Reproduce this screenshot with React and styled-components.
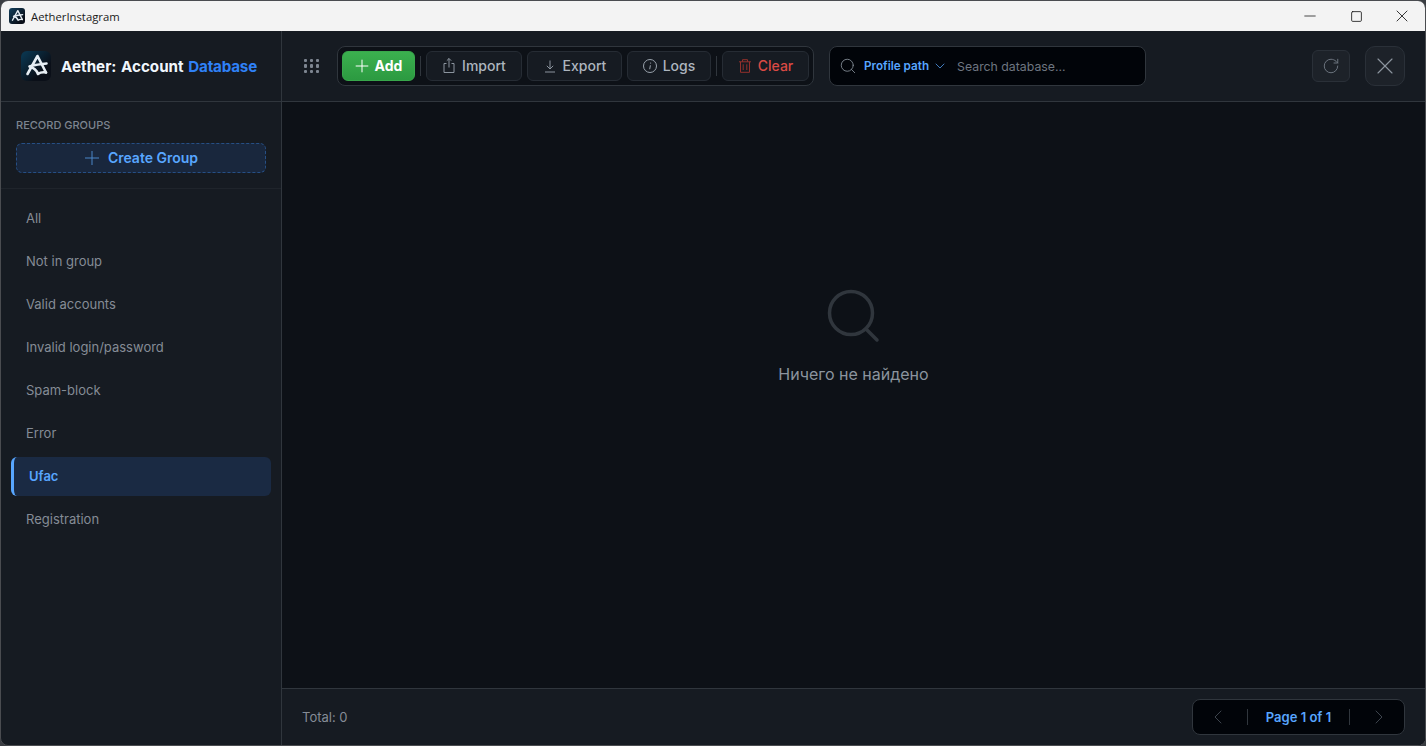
import React from 'react'
import styled, { createGlobalStyle, css } from 'styled-components'
import { ChevronDown, ChevronLeft, ChevronRight, Minus, RotateCw, Search, Square, X } from 'lucide-react'

const GlobalStyle = createGlobalStyle`
  html, body, #root { margin: 0; height: 100%; background: #3a3d42; overflow: hidden; }
  * { box-sizing: border-box; }
  body { font-family: Inter, "Noto Sans", sans-serif; }
`

const Window = styled.div`
  width: 1426px;
  height: 746px;
  border: 1px solid #4a4c50;
  border-radius: 8px;
  overflow: hidden;
  display: flex;
  flex-direction: column;
  background: #161b22;
`

const TitleBar = styled.header`
  height: 30px;
  flex: none;
  background: #f3f3f3;
  display: flex;
  align-items: center;
  padding-left: 8px;
  color: #1a1a1a;
  font: 11.3px "Open Sans", "Noto Sans", sans-serif;
`

const TitleText = styled.span`
  flex: 1;
  margin-left: 6px;
`

const WinButton = styled.span`
  width: 46px;
  height: 30px;
  display: flex;
  align-items: center;
  justify-content: center;
  color: #111;
`

const Body = styled.div`
  flex: 1;
  display: flex;
  min-height: 0;
`

const Sidebar = styled.aside`
  width: 281px;
  flex: none;
  border-right: 1px solid #30363d;
  display: flex;
  flex-direction: column;
`

const Brand = styled.div`
  height: 71px;
  flex: none;
  border-bottom: 1px solid #30363d;
  display: flex;
  align-items: center;
  padding-left: 20px;
  gap: 10px;
  font-size: 15.2px;
  font-weight: 700;
  word-spacing: 1px;
  color: #f0f6fc;
  white-space: nowrap;
`

const BrandAccent = styled.span`
  color: #2f81f7;
  letter-spacing: -0.2px;
`

const LogoBox = styled.span`
  width: 30px;
  height: 30px;
  border-radius: 6px;
  display: block;
  background: linear-gradient(135deg, #0a3a55, #0a0f18 70%);
`

const SmallLogo = styled(LogoBox)`
  width: 16px;
  height: 16px;
  border-radius: 3px;
  background: linear-gradient(135deg, #123f5c, #0a0f18 80%);
`

const GroupHead = styled.div`
  flex: none;
  padding: 17px 15px 15px;
  border-bottom: 1px solid #1f242b;
`

const GroupLabel = styled.div`
  font-size: 11px;
  line-height: 13px;
  font-weight: 500;
  color: #7d8590;
  margin-bottom: 11px;
`

const CreateButton = styled.button`
  width: 250px;
  height: 30px;
  border: 1px dashed #264f85;
  border-radius: 6px;
  background: #19273d;
  color: #58a6ff;
  font: 600 14px Inter, sans-serif;
  display: flex;
  align-items: center;
  justify-content: center;
  gap: 9px;
  padding: 0 0 2px 1px;
`

const GroupList = styled.nav`
  padding: 10px 10px 0;
  display: flex;
  flex-direction: column;
  gap: 4px;
`

const GroupItem = styled.div`
  height: 39px;
  width: 260px;
  display: flex;
  align-items: center;
  padding: 0 0 2px 15px;
  border-radius: 6px;
  font-size: 13px;
  color: #858c96;
  ${p => p.$active && css`
    background: #1a2a43;
    border-left: 3px solid #58a6ff;
    color: #58a6ff;
    font-weight: 600;
  `}
`

const Main = styled.main`
  flex: 1;
  min-width: 0;
  display: flex;
  flex-direction: column;
  background: #0d1117;
`

const Toolbar = styled.div`
  height: 71px;
  flex: none;
  background: #161b22;
  border-bottom: 1px solid #30363d;
  display: flex;
  align-items: center;
  padding: 0 20px 0 22px;
`

const DotGrid = styled.span`
  width: 15px;
  display: grid;
  grid-template-columns: repeat(3, 3.4px);
  grid-auto-rows: 3.4px;
  justify-content: space-between;
  row-gap: 2.4px;
  margin-right: 18px;
  & > i { background: #7d8590; border-radius: 1px; }
`

const ActionGroup = styled.div`
  height: 40px;
  display: flex;
  align-items: center;
  gap: 5px;
  padding: 0 4px;
  border: 1px solid #30363d;
  border-radius: 8px;
  background: #0d1117;
  margin-right: 15px;
`

const ToolButton = styled.button`
  height: 30px;
  width: ${p => p.$w}px;
  display: flex;
  align-items: center;
  justify-content: center;
  gap: 6px;
  padding: 0 0 2px;
  border: 1px solid #262c34;
  border-radius: 6px;
  background: #161b22;
  color: #adb5bf;
  font: 500 14px Inter, sans-serif;
  ${p => p.$primary && css`
    border-color: #38a74b;
    background: linear-gradient(#3bb04f, #2c9a41);
    color: #fff;
    font-weight: 700;
  `}
  ${p => p.$danger && css`
    color: #da4a44;
  `}
`

const ToolIcon = styled.svg.attrs({ viewBox: '0 0 14 14', fill: 'none', stroke: 'currentColor' })`
  width: 14px;
  height: 14px;
  flex: none;
  margin-top: 2px;
  overflow: visible;
  stroke-width: 1;
  color: ${p => p.$tint || 'inherit'};
`

const Sep = styled.span`
  width: 1px;
  height: 20px;
  background: #30363d;
`

const SearchBox = styled.div`
  width: 317px;
  height: 40px;
  border: 1px solid #30363d;
  border-radius: 8px;
  background: #010409;
  display: flex;
  align-items: center;
  padding-left: 9px;
  color: #8b949e;
`

const FieldPicker = styled.span`
  display: flex;
  align-items: center;
  gap: 3px;
  margin: 0 9px 0 7px;
  font-size: 11.7px;
  font-weight: 600;
  color: #58a6ff;
`

const SearchHint = styled.span`
  font-size: 12.3px;
  color: #6e7681;
`

const Spacer = styled.div`
  flex: 1;
`

const IconButton = styled.button`
  width: ${p => p.$size}px;
  height: ${p => (p.$tall ? p.$size : 32)}px;
  display: flex;
  align-items: center;
  justify-content: center;
  padding: 0;
  border: 1px solid #2a3038;
  border-radius: ${p => (p.$tall ? 10 : 6)}px;
  background: #1d2229;
  color: ${p => (p.$tall ? '#8b949e' : '#6e7681')};
  margin-left: ${p => p.$gap || 0}px;
`

const Empty = styled.div`
  flex: 1;
  display: flex;
  flex-direction: column;
  align-items: center;
  padding-top: 187px;
  color: #8b949e;
  font-size: 16px;
`

const EmptyIcon = styled.svg`
  width: 54px;
  height: 54px;
  margin-bottom: 21px;
  margin-left: 1px;
`

const Footer = styled.footer`
  height: 57px;
  flex: none;
  background: #161b22;
  border-top: 1px solid #30363d;
  display: flex;
  align-items: center;
  justify-content: space-between;
  padding: 0 20px;
  font-size: 13px;
  color: #858c96;
`

const Pager = styled.div`
  width: 213px;
  height: 36px;
  border: 1px solid #30363d;
  border-radius: 8px;
  background: #010409;
  display: flex;
  align-items: center;
  padding: 0 13px;
  color: #3d444d;
`

const PageLabel = styled.span`
  flex: 1;
  height: 16px;
  margin: 0 17px;
  border-left: 1px solid #30363d;
  border-right: 1px solid #30363d;
  display: flex;
  align-items: center;
  justify-content: center;
  font-size: 13px;
  font-weight: 600;
  color: #58a6ff;
`

const Logo = ({ size }) => (
  <svg width={size} height={size} viewBox="0 0 30 30" fill="none" stroke="#e6edf3" strokeWidth="2.6" strokeLinecap="round" strokeLinejoin="round">
    <path d="M6.5 23 L16.5 5 L25 21.5" />
    <path d="M25.5 12.5 C18 13.5 12 14 8.5 15.5 C12.5 16.5 15.5 19 17 23 C19 21.5 22 21 25 21.5" />
  </svg>
)

const groups = ['All', 'Not in group', 'Valid accounts', 'Invalid login/password', 'Spam-block', 'Error', 'Ufac', 'Registration']

export default function App() {
  return (
    <>
      <GlobalStyle />
      <Window>
        <TitleBar>
          <SmallLogo><Logo size={16} /></SmallLogo>
          <TitleText>AetherInstagram</TitleText>
          <WinButton><Minus size={18} strokeWidth={1} /></WinButton>
          <WinButton><Square size={13} strokeWidth={1.5} /></WinButton>
          <WinButton><X size={20} strokeWidth={1} /></WinButton>
        </TitleBar>
        <Body>
          <Sidebar>
            <Brand>
              <LogoBox><Logo size={30} /></LogoBox>
              <span>Aether: Account <BrandAccent>Database</BrandAccent></span>
            </Brand>
            <GroupHead>
              <GroupLabel>RECORD GROUPS</GroupLabel>
              <CreateButton>
                <ToolIcon $tint="#4a86c8"><path d="M7 0V14M0 7H14" /></ToolIcon>
                Create Group
              </CreateButton>
            </GroupHead>
            <GroupList>
              {groups.map(g => <GroupItem key={g} $active={g === 'Ufac'}>{g}</GroupItem>)}
            </GroupList>
          </Sidebar>
          <Main>
            <Toolbar>
              <DotGrid>{Array.from({ length: 9 }, (_, i) => <i key={i} />)}</DotGrid>
              <ActionGroup>
                <ToolButton $w={73} $primary>
                  <ToolIcon><path d="M7 .7V13.3M.7 7H13.3" /></ToolIcon>
                  Add
                </ToolButton>
                <Sep />
                <ToolButton $w={96}>
                  <ToolIcon $tint="#8b949e">
                    <path d="M4.5 4.5H2V13.5H12V4.5H9.5" />
                    <path d="M7 8.5V-.5M4.8 1.7L7 -.5L9.2 1.7" />
                  </ToolIcon>
                  Import
                </ToolButton>
                <ToolButton $w={95}>
                  <ToolIcon $tint="#8b949e">
                    <path d="M7 1.5V10M3.8 6.8L7 10L10.2 6.8" />
                    <path d="M2 13H12" />
                  </ToolIcon>
                  Export
                </ToolButton>
                <ToolButton $w={84}>
                  <ToolIcon $tint="#9aa3ad">
                    <circle cx="7" cy="7" r="6.5" />
                    <path d="M7.4 6.3L6.7 10.2M7.6 3.6V4.6" />
                  </ToolIcon>
                  Logs
                </ToolButton>
                <Sep />
                <ToolButton $w={87} $danger>
                  <ToolIcon $tint="#93302c">
                    <path d="M1 2.8H13M4.5 2.8V.7H9.5V2.8" />
                    <path d="M2.5 2.8V13.3H11.5V2.8M5.2 5.3V11M8.8 5.3V11" />
                  </ToolIcon>
                  Clear
                </ToolButton>
              </ActionGroup>
              <SearchBox>
                <Search size={18} strokeWidth={1.1} />
                <FieldPicker>Profile path<ChevronDown size={16} strokeWidth={1.1} /></FieldPicker>
                <SearchHint>Search database...</SearchHint>
              </SearchBox>
              <Spacer />
              <IconButton $size={38}><RotateCw size={18} strokeWidth={1.3} /></IconButton>
              <IconButton $size={40} $tall $gap={15}><X size={28} strokeWidth={1} /></IconButton>
            </Toolbar>
            <Empty>
              <EmptyIcon viewBox="0 0 54 54" fill="none" stroke="#30363d" strokeWidth="3.5" strokeLinecap="round">
                <circle cx="24" cy="24" r="21.5" />
                <path d="M39 40 L50 51" />
              </EmptyIcon>
              Ничего не найдено
            </Empty>
            <Footer>
              <span>Total: 0</span>
              <Pager>
                <ChevronLeft size={24} strokeWidth={1} />
                <PageLabel>Page 1 of 1</PageLabel>
                <ChevronRight size={24} strokeWidth={1} />
              </Pager>
            </Footer>
          </Main>
        </Body>
      </Window>
    </>
  )
}
